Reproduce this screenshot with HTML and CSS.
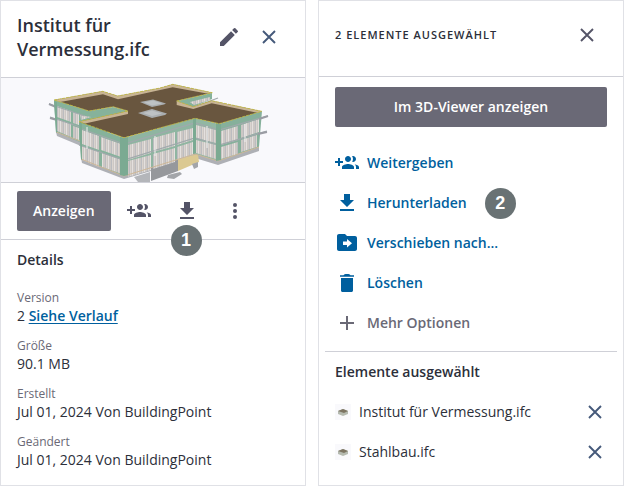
FILE: index.html
```html
<!DOCTYPE html>
<html lang="de">
<head>
    <meta charset="UTF-8">
    <meta name="viewport" content="width=device-width, initial-scale=1.0">
    <title>Institut für Vermessung.ifc</title>
    <link rel="stylesheet" href="styles.css">
</head>
<body>
    <!-- shared icons -->
    <svg class="sprite" aria-hidden="true">
      <symbol id="icon-close" viewBox="0 0 24 24">
        <path d="M6 6l12 12M18 6L6 18" fill="none" stroke="currentColor" stroke-width="1.9"/>
      </symbol>
      <symbol id="icon-edit" viewBox="0 0 24 24">
        <path d="M3 17.25V21h3.75L17.81 9.94l-3.75-3.75L3 17.25zM20.71 7.04a1 1 0 0 0 0-1.41l-2.34-2.34a1 1 0 0 0-1.41 0l-1.83 1.83 3.75 3.75 1.83-1.83z"/>
      </symbol>
      <symbol id="icon-share" viewBox="0 0 24 24">
        <path d="M8 10H5V7H3v3H0v2h3v3h2v-3h3v-2zm10 1c1.66 0 2.99-1.34 2.99-3S19.66 5 18 5c-.32 0-.63.05-.91.14.57.81.9 1.79.9 2.86s-.34 2.04-.9 2.86c.28.09.59.14.91.14zm-5 0c1.66 0 2.99-1.34 2.99-3S14.66 5 13 5c-1.66 0-3 1.34-3 3s1.34 3 3 3zm6.62 2.16c.83.73 1.38 1.66 1.38 2.84v2h3v-2c0-1.54-2.37-2.49-4.38-2.84zM13 13c-2 0-6 1-6 3v2h12v-2c0-2-4-3-6-3z"/>
      </symbol>
      <symbol id="icon-download" viewBox="0 0 24 24">
        <path d="M19 9h-4V3H9v6H5l7 7 7-7zM5 18v2h14v-2H5z"/>
      </symbol>
      <symbol id="icon-more" viewBox="0 0 24 24">
        <circle cx="12" cy="6" r="2"/><circle cx="12" cy="12" r="2"/><circle cx="12" cy="18" r="2"/>
      </symbol>
      <symbol id="icon-move" viewBox="0 0 24 24">
        <path d="M20 5h-8l-2-2H4c-1.1 0-2 .9-2 2v13c0 1.1.9 2 2 2h16c1.1 0 2-.9 2-2V7c0-1.1-.9-2-2-2zm-8 11.5V14H8v-3.500h4V8l5 4.250z"/>
      </symbol>
      <symbol id="icon-delete" viewBox="0 0 24 24">
        <path d="M6 7h12v12.500c0 .8-.7 1.500-1.500 1.500h-9c-.8 0-1.500-.7-1.500-1.500V7zM5 5.800V4.300h3.500C9 3.300 10 3 12 3s3 .3 3.500 1.300H19v1.500H5z"/>
      </symbol>
      <symbol id="icon-plus" viewBox="0 0 24 24">
        <path d="M12 5v14M5 12h14" fill="none" stroke="currentColor" stroke-width="2"/>
      </symbol>
      <symbol id="model" viewBox="1 78 304 104">
        <!-- base and entrance -->
        <path d="M56 132l1 4 24 10-1-8z" fill="#b0b2b7"/>
        <path d="M81 158l1 5 42 16 71-21 23 7 41-14v-5l-41 14-23-8-71 22z" fill="#aeb0b5"/>
        <path d="M134 177l16-5v10h-12z" fill="#b4b6ba"/>
        <path d="M151 167l27-8v12l-27 10z" fill="#96989c"/>
        <path d="M178 159l20-5 1 8-21 9z" fill="#dbc992"/>
        <path d="M192 164l6-2v5l-4 2zM168 175l12-3 2 2-8 5-7-1z" fill="#a3a5a9"/>
        <!-- walls -->
        <path d="M54 100l35 11 24-4 15 4v12L82 143 56 132z" fill="#86b29b"/>
        <path d="M177 101l35-8v6l-19 8z" fill="#86b29b"/>
        <path d="M79 122l45 16v38l-43-17z" fill="#86b29b"/>
        <path d="M124 138l71-20v36l-71 22z" fill="#8fb5a1"/>
        <path d="M195 118l24 6-1 37-23-7z" fill="#92b7a3"/>
        <path d="M219 124l43-13-3 36-41 14z" fill="#86b09b"/>
        <!-- windows -->
        <g fill="url(#panes)">
          <path d="M57 106l14 5v11l-14-5zM73 112l6 2v11l-6-2zM80 115l11 2-10 3zM57 119l14 5v13l-14-6zM73 126l6 2v12l-6-2z"/>
          <path d="M82 130l17 6v14l-17-6zM101 137l20 7v13l-20-7zM82 146l17 6v15l-17-7zM102 153l20 7v14l-20-7z"/>
          <path d="M128 145l23-6v14l-23 7zM153 138l22-6v14l-22 6zM177 132l16-4v12l-16 5z"/>
          <path d="M128 161l23-6v15l-23 7zM153 154l22-6v14l-22 7zM177 147l16-5v13l-16 5z"/>
          <path d="M196 125l20 5v13l-20-5zM196 140l20 5v14l-20-6z"/>
          <path d="M221 131l17-5v14l-17 5zM241 125l18-6v13l-18 6zM221 147l17-5v12l-17 5zM241 140l16-5v12l-16 5z"/>
          <path d="M190 102l20-5v3l-16 5z"/>
        </g>
        <g fill="none" stroke="#a0a9ac" stroke-width="1.300">
          <path d="M49 104l36 12"/>
          <path d="M50 117l30 10"/>
          <path d="M79 128l45 16 71-21 24 7 49-14"/>
          <path d="M79 145l45 15 71-22 24 7 48-14"/>
          <path d="M194 107l24-9"/>
        </g>
        <path d="M49 104l7 3M50 118l7 2M259 119l9-3M258 134l9-2" fill="none" stroke="#9a9ca3" stroke-width="2"/>
        <path d="M56 132l24 9M81 159l43 17 71-22 23 7 41-14" fill="none" stroke="#cdb798" stroke-width="1"/>
        <path d="M87 127v22M155 136v20M207 126v22M245 124v18" fill="none" stroke="#f0f0ef" stroke-width="1"/>
        <path d="M54 101l3 1v30l-1 1zM79 122l3 1v37l-1-1zM120 137l4 1 4-1v38l-4 1-4-1zM193 119l3-1v35l-3 1zM216 123l5 1v36l-5 1z" fill="#7baa92"/>
        <!-- roof -->
        <path d="M54 100l48.700-8.700L117.700 96 160 88l12.700-3.700 39.600 8.400L176.700 101l16.600 5.700 18.400-6 50 10.600-42.400 12.400-24.300-5.400L124 137.700 79 121.700 128 111l-15-4.300L89 111z" fill="#69563f"/>
        <path d="M54 100l48.700-8.700L117.700 96l42.300-8 12.700-3.700 39.600 8.400-4 1-35.600-6.500-54.700 12-15-5L60 102z" fill="#c8b494"/>
        <path d="M176.700 101l16.600 5.700 18.400-6 50 10.600-4 1.500-46-9.500-18.400 5.700-16.600-4zM79 121.700l49-10.700v3l-43 9.500z" fill="#c8b494"/>
        <path d="M54 100l48.700-8.700L117.700 96 160 88l12.700-3.700 39.600 8.400L176.700 101l16.600 5.700 18.400-6 50 10.600-42.400 12.400-24.300-5.400L124 137.700 79 121.700 128 111l-15-4.300L89 111z" fill="none" stroke="#c3bd3a" stroke-width=".8" stroke-dasharray="3 1"/>
        <!-- skylights -->
        <path d="M140 102l13-2.500 13 4-2 1-12 2.500zM138 113l14-4 15 4.500-2 1.500-13 3z" fill="#aaaeb0"/>
        <path d="M144 102.500l9-2 9 3-10 2zM143 113l9-2.500 10 3-10 2.500z" fill="#bec2c4"/>
      </symbol>
      <pattern id="panes" width="6" height="60" patternUnits="userSpaceOnUse">
        <rect width="6" height="60" fill="#ccc7c4"/>
        <rect width="1" height="60" fill="#e4e0de"/>
        <rect x="3" width="1" height="60" fill="#bbbcc0"/>
        <rect x="4" width="1" height="60" fill="#dad4cf"/>
      </pattern>
    </svg>

    <main class="panels">
      <!-- file details -->
      <section class="panel">
        <header class="panelHeader">
          <h1 class="panelTitle">Institut für Vermessung.ifc</h1>
          <button class="iconButton" type="button" aria-label="Umbenennen"><svg class="icon"><use href="#icon-edit"/></svg></button>
          <button class="iconButton closeBlue" type="button" aria-label="Schließen"><svg class="icon"><use href="#icon-close"/></svg></button>
        </header>
        <div class="preview">
          <svg class="previewModel" viewBox="0 0 304 104" aria-hidden="true"><use href="#model" width="304" height="104"/></svg>
        </div>
        <div class="toolbar">
          <button class="primaryButton" type="button">Anzeigen</button>
          <button class="iconButton" type="button" aria-label="Weitergeben"><svg class="icon"><use href="#icon-share"/></svg></button>
          <div class="marked">
            <button class="iconButton" type="button" aria-label="Herunterladen"><svg class="icon"><use href="#icon-download"/></svg></button>
            <span class="badge badgeOver">1</span>
          </div>
          <button class="iconButton" type="button" aria-label="Mehr"><svg class="icon"><use href="#icon-more"/></svg></button>
        </div>
        <div class="details">
          <h2 class="sectionTitle">Details</h2>
          <dl class="detailList">
            <div class="detail">
              <dt>Version</dt>
              <dd>2 <a class="historyLink" href="#">Siehe Verlauf</a></dd>
            </div>
            <div class="detail">
              <dt>Größe</dt>
              <dd>90.1 MB</dd>
            </div>
            <div class="detail">
              <dt>Erstellt</dt>
              <dd>Jul 01, 2024 Von BuildingPoint</dd>
            </div>
            <div class="detail">
              <dt>Geändert</dt>
              <dd>Jul 01, 2024 Von BuildingPoint</dd>
            </div>
          </dl>
        </div>
      </section>

      <!-- selection -->
      <section class="panel">
        <header class="panelHeader selectionHeader">
          <h2 class="selectionTitle">2 Elemente ausgewählt</h2>
          <button class="iconButton" type="button" aria-label="Auswahl aufheben"><svg class="icon"><use href="#icon-close"/></svg></button>
        </header>
        <div class="actions">
          <button class="primaryButton" type="button">Im 3D-Viewer anzeigen</button>
          <ul class="actionList">
            <li><button class="action" type="button"><svg class="icon"><use href="#icon-share"/></svg>Weitergeben</button></li>
            <li>
              <button class="action" type="button"><svg class="icon"><use href="#icon-download"/></svg>Herunterladen</button>
              <span class="badge">2</span>
            </li>
            <li><button class="action" type="button"><svg class="icon"><use href="#icon-move"/></svg>Verschieben nach...</button></li>
            <li><button class="action" type="button"><svg class="icon"><use href="#icon-delete"/></svg>Löschen</button></li>
            <li><button class="action actionMore" type="button"><svg class="icon"><use href="#icon-plus"/></svg>Mehr Optionen</button></li>
          </ul>
        </div>
        <hr class="divider">
        <div class="selection">
          <h2 class="sectionTitle">Elemente ausgewählt</h2>
          <ul class="fileList">
            <li>
              <svg class="thumb" viewBox="0 0 16 16" aria-hidden="true"><path d="M3 7l5-2 5 2v3l-5 2-5-2z" fill="#b5bab0"/><path d="M3 7l5-2 5 2-4 2z" fill="#7c7462"/></svg>
              <span class="fileName">Institut für Vermessung.ifc</span>
              <button class="iconButton removeButton" type="button" aria-label="Institut für Vermessung.ifc entfernen"><svg class="icon"><use href="#icon-close"/></svg></button>
            </li>
            <li>
              <svg class="thumb" viewBox="0 0 16 16" aria-hidden="true"><path d="M3 7l5-2 5 2v3l-5 2-5-2z" fill="#b5bab0"/><path d="M3 7l5-2 5 2-4 2z" fill="#7c7462"/></svg>
              <span class="fileName">Stahlbau.ifc</span>
              <button class="iconButton removeButton" type="button" aria-label="Stahlbau.ifc entfernen"><svg class="icon"><use href="#icon-close"/></svg></button>
            </li>
          </ul>
        </div>
      </section>
    </main>
</body>
</html>
```

FILE: styles.css
```css
:root {
    --text-color: #2c2f3a;
    --label-color: #6a6976;
    --icon-color: #545467;
    --link-color: #005f9e;
    --line-color: #cfd0d7;
    --border-color: #e0e1e6;
    --badge-color: #697274;
}
* {
    box-sizing: border-box;
}
body {
    margin: 0;
    font: 14px/20px "Open Sans", "Noto Sans", sans-serif;
    color: var(--text-color);
    background-color: #fff;
}
h1, h2, ul, dl, dd {
    margin: 0;
    padding: 0;
}
ul {
    list-style: none;
}
button {
    font: inherit;
    border: none;
    cursor: pointer;
}
.sprite {
    position: absolute;
    width: 0;
    height: 0;
}
.panels {
    display: grid;
    grid-template-columns: 1fr 1fr;
    gap: 12px;
    min-height: 100vh;
}
.panel {
    border: 1px solid var(--border-color);
}
.panelHeader {
    display: flex;
    align-items: center;
    padding: 12px 16px 16px;
    border-bottom: 1px solid var(--line-color);
}
.panelTitle {
    flex: 1;
    font-size: 18px;
    line-height: 24px;
    font-weight: 600;
}
.selectionHeader {
    padding: 14px 16px 21px;
}
.selectionTitle {
    flex: 1;
    font-size: 11px;
    font-weight: 600;
    letter-spacing: 1px;
    text-transform: uppercase;
}

/* buttons and icons */
.icon {
    width: 24px;
    height: 24px;
    flex: none;
    fill: currentColor;
}
.iconButton {
    display: flex;
    align-items: center;
    justify-content: center;
    width: 40px;
    height: 40px;
    padding: 0;
    color: var(--icon-color);
    background: none;
}
.closeBlue,
.removeButton {
    color: #45597a;
}
.primaryButton {
    height: 40px;
    padding: 0 16px;
    font-weight: 600;
    color: #fff;
    background-color: #6a6976;
    border-radius: 2px;
}

/* preview and toolbar */
.preview {
    background-color: #f9f9fc;
    border-bottom: 1px solid var(--line-color);
}
.previewModel {
    display: block;
    width: 100%;
}
.toolbar {
    display: flex;
    gap: 8px;
    padding: 8px 16px;
    border-bottom: 1px solid var(--line-color);
}
.marked {
    position: relative;
}
.badge {
    display: flex;
    align-items: center;
    justify-content: center;
    width: 31px;
    height: 31px;
    border-radius: 50%;
    font: bold 18px "Liberation Sans", Arial, sans-serif;
    color: #fff;
    background-color: var(--badge-color);
}
.badgeOver {
    position: absolute;
    top: 34px;
    left: 4px;
}

/* details */
.details {
    padding: 10px 16px;
}
.sectionTitle {
    font-size: 14px;
    font-weight: 600;
}
.detailList {
    display: flex;
    flex-direction: column;
    gap: 12px;
    padding-top: 20px;
}
.detail dt {
    font-size: 12px;
    line-height: 16px;
    color: var(--label-color);
}
.historyLink {
    font-weight: 600;
    color: var(--link-color);
    text-underline-offset: 2px;
}

/* selection */
.actions {
    padding: 10px 16px 8px;
}
.actions .primaryButton {
    width: 100%;
}
.actionList {
    padding-top: 16px;
}
.actionList li {
    display: flex;
    align-items: center;
    gap: 18px;
}
.action {
    display: flex;
    align-items: center;
    gap: 8px;
    height: 40px;
    padding: 0;
    font-weight: 600;
    color: var(--link-color);
    background: none;
}
.actionMore {
    color: var(--label-color);
}
.divider {
    margin: 0 6px;
    border: none;
    border-top: 1px solid var(--line-color);
}
.selection {
    padding: 10px 8px 12px 16px;
}
.fileList {
    padding-top: 10px;
}
.fileList li {
    display: flex;
    align-items: center;
    gap: 8px;
}
.fileName {
    flex: 1;
}
.thumb {
    width: 16px;
    height: 16px;
    background-color: #f9f9fc;
}
```
